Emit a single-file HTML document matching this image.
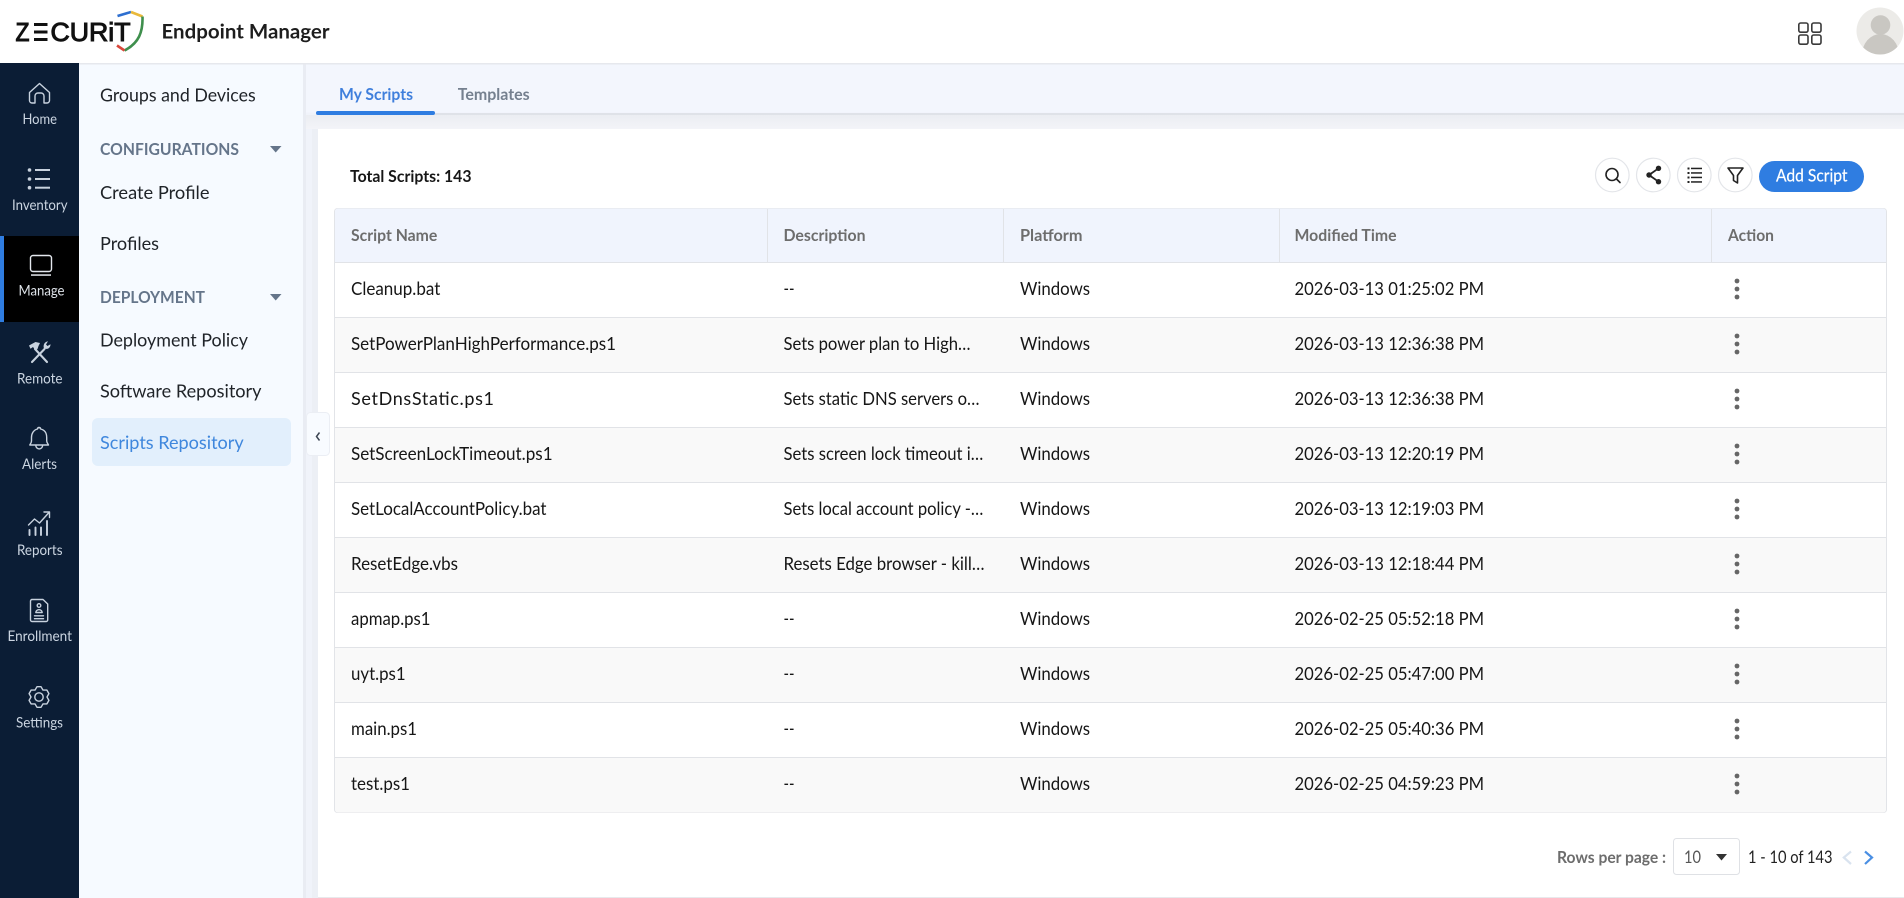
<!DOCTYPE html>
<html lang="en">
<head>
<meta charset="utf-8">
<title>Endpoint Manager - Scripts Repository</title>
<style>
html,body{margin:0;padding:0;width:1904px;height:898px;overflow:hidden;background:#fff}
svg{display:block}
text{font-family:"Lato","Carlito","Liberation Sans",sans-serif;white-space:pre}
.n{font-size:18px;fill:#1f2328}
.h{font-size:16px;font-weight:700;fill:#65758a}
.s{font-size:14.5px;fill:#cbd5e1}
.th{font-size:16px;font-weight:700;fill:#6d6d6d}
.td{font-size:18px;fill:#161616}
.ic{fill:none;stroke:#c8d2de;stroke-width:1.4;stroke-linecap:round;stroke-linejoin:round}
.tb{fill:none;stroke:#222;stroke-width:1.6;stroke-linecap:round;stroke-linejoin:round}
</style>
</head>
<body>
<svg width="1904" height="898" viewBox="0 0 1904 898" xmlns="http://www.w3.org/2000/svg">
<defs>
<clipPath id="av"><circle cx="1880" cy="31" r="23.5"/></clipPath>
<linearGradient id="sh" x1="0" y1="0" x2="0" y2="1"><stop offset="0" stop-color="#ebedf2"/><stop offset="1" stop-color="#f3f4f8"/></linearGradient>
</defs>

<!-- page backgrounds -->
<rect width="1904" height="898" fill="#f0f3fa"/>
<rect x="0" y="0" width="1904" height="63" fill="#fff"/>
<rect x="0" y="63" width="1904" height="1.5" fill="#e6e8ed"/>

<!-- logo -->
<text x="15.5" y="41" font-size="26" textLength="14" lengthAdjust="spacingAndGlyphs" stroke="#111" stroke-width="1" style="font-family:'Liberation Sans',sans-serif" fill="#111">Z</text>
<rect x="34" y="23" width="13.5" height="3" fill="#111"/><rect x="34" y="30.5" width="13.5" height="3" fill="#111"/><rect x="34" y="38" width="13.5" height="3" fill="#111"/>
<text x="50.5" y="41" font-size="26" textLength="80" lengthAdjust="spacingAndGlyphs" stroke="#111" stroke-width="1" style="font-family:'Liberation Sans',sans-serif" fill="#111">CURiT</text>
<path d="M117.5 16 L131 12" fill="none" stroke="#2e6fd0" stroke-width="2.6"/>
<path d="M131 12 L142.5 16.5" fill="none" stroke="#e9b93a" stroke-width="2.6"/>
<path d="M142.5 16.5 C143 32 139 43 124.5 50.5" fill="none" stroke="#3f8f4d" stroke-width="2.6"/>
<path d="M117 45.5 L124.5 50.5" fill="none" stroke="#d9483b" stroke-width="2.6"/>

<text x="161.5" y="38.5" font-size="20.5" font-weight="700" textLength="168" lengthAdjust="spacingAndGlyphs" fill="#1d1d1d">Endpoint Manager</text>

<!-- header right -->
<g fill="none" stroke="#3a3a3a" stroke-width="1.6">
<rect x="1798.8" y="23" width="9.2" height="9.2" rx="1.8"/><rect x="1811.8" y="23" width="9.2" height="9.2" rx="1.8"/>
<rect x="1798.8" y="35" width="9.2" height="9.2" rx="1.8"/><rect x="1811.8" y="35" width="9.2" height="9.2" rx="1.8"/>
</g>
<circle cx="1880" cy="31" r="23.5" fill="#ecebe8"/>
<g clip-path="url(#av)" fill="#c9c7c2"><circle cx="1880.5" cy="25" r="9.8"/><ellipse cx="1880.5" cy="55" rx="18.5" ry="21"/></g>

<!-- sidebar -->
<rect x="0" y="63" width="79" height="835" fill="#0b1d35"/>
<rect x="0" y="236" width="79" height="86" fill="#000"/>
<rect x="0" y="236" width="4" height="86" fill="#2f7de1"/>

<path class="ic" d="M29.5 92.5 L39.5 83.5 L49.5 92.5 V100.5 a2.5 2.5 0 0 1-2.5 2.5 H44 V96 a3 3 0 0 0-3-3 H38 a3 3 0 0 0-3 3 V103 H32 a2.5 2.5 0 0 1-2.5-2.5 Z"/>
<text class="s" x="22.5" y="124" textLength="34.5" lengthAdjust="spacingAndGlyphs">Home</text>

<g fill="#c8d2de"><circle cx="29.5" cy="170" r="1.8"/><circle cx="29.5" cy="179" r="1.8"/><circle cx="29.5" cy="187.7" r="1.8"/>
<rect x="35" y="169" width="15" height="2"/><rect x="35" y="178" width="15" height="2"/><rect x="35" y="186.7" width="15" height="2"/></g>
<text class="s" x="12" y="210" textLength="55.5" lengthAdjust="spacingAndGlyphs">Inventory</text>

<rect x="30.5" y="255.5" width="21" height="16" rx="2.5" fill="none" stroke="#e4e8ee" stroke-width="1.4"/>
<rect x="31" y="274.3" width="20" height="1.5" fill="#e4e8ee"/>
<text class="s" x="18.5" y="295.7" textLength="46" lengthAdjust="spacingAndGlyphs" style="fill:#dfe4ea">Manage</text>

<g fill="none" stroke="#c8d2de" stroke-linecap="round">
<path d="M47 362 L35 349" stroke-width="2.1"/>
<path d="M32 362 L44.5 349" stroke-width="2.1"/>
</g>
<path d="M29 345.5 L35.5 342 L40 343 L38.5 346 L37.5 349 L35.5 350.5 L33 347 L30.5 348.8 Z" fill="#c8d2de"/>
<path d="M44 348.5 C42.8 345 44.5 342 48 341.3 L46 344.5 L47.5 346 L50.5 344.2 C50.5 347.8 47.8 349.8 44 348.5 Z" fill="#c8d2de"/>
<text class="s" x="17" y="383.3" textLength="45.5" lengthAdjust="spacingAndGlyphs">Remote</text>

<path class="ic" d="M39 427.5 a1.6 1.6 0 0 1 1.6 1.5 C45 430 46.7 433.5 46.7 437.5 V441 C46.7 443 48.5 444.5 48.5 445 H29.8 C29.8 444.5 31.5 443 31.5 441 V437.5 C31.5 433.5 33.5 430 37.5 429 A1.6 1.6 0 0 1 39 427.5 Z M35.8 445.5 a3.4 3.4 0 0 0 6.8 0"/>
<text class="s" x="22" y="469" textLength="35" lengthAdjust="spacingAndGlyphs">Alerts</text>

<path class="ic" d="M28.5 525 L34.5 519 L39.5 523 L49 512.5 M44 512 H49.5 V517.5"/>
<path d="M29.5 530 V535 M35.5 527.5 V535 M41 527.5 V535 M47 521 V535" fill="none" stroke="#c8d2de" stroke-width="1.9" stroke-linecap="round"/>
<text class="s" x="17" y="555" textLength="45.5" lengthAdjust="spacingAndGlyphs">Reports</text>

<path class="ic" d="M32 599.5 H43 L47.7 604 V620 a1.5 1.5 0 0 1-1.5 1.5 H32 a1.5 1.5 0 0 1-1.5-1.5 V601 a1.5 1.5 0 0 1 1.5-1.5 Z" stroke-width="1.1"/>
<circle cx="39" cy="605.5" r="1.8" class="ic" stroke-width="1"/>
<path d="M35.8 612.5 a3.2 2.8 0 0 1 6.4 0 Z M34.5 615.8 H43.5 M34.5 618.7 H43.5" class="ic" stroke-width="1"/>
<text class="s" x="7.5" y="641" textLength="64.5" lengthAdjust="spacingAndGlyphs">Enrollment</text>

<path class="ic" d="M41 686.7 L43 690.1 L46.9 690.1 L48.9 693.6 L47 697 L48.9 700.4 L46.9 703.9 L43 703.9 L41 707.3 L37 707.3 L35 703.9 L31.1 703.9 L29.1 700.4 L31 697 L29.1 693.6 L31.1 690.1 L35 690.1 L37 686.7Z"/>
<circle class="ic" cx="39" cy="697" r="4.2"/>
<text class="s" x="16" y="727.5" textLength="47" lengthAdjust="spacingAndGlyphs">Settings</text>

<!-- sub navigation -->
<rect x="79" y="64.5" width="224" height="833.5" fill="#f6faff"/>
<rect x="303" y="64.5" width="3" height="833.5" fill="#e9ecf3"/>
<text class="n" x="100" y="101.7" textLength="155.7" lengthAdjust="spacingAndGlyphs">Groups and Devices</text>
<text class="h" x="100" y="155" textLength="139" lengthAdjust="spacingAndGlyphs">CONFIGURATIONS</text>
<path d="M270 146 H281.5 L275.7 152.5 Z" fill="#65758a"/>
<text class="n" x="100" y="199" textLength="109.5" lengthAdjust="spacingAndGlyphs">Create Profile</text>
<text class="n" x="100" y="250" textLength="59" lengthAdjust="spacingAndGlyphs">Profiles</text>
<text class="h" x="100" y="303" textLength="105" lengthAdjust="spacingAndGlyphs">DEPLOYMENT</text>
<path d="M270 294 H281.5 L275.7 300.5 Z" fill="#65758a"/>
<text class="n" x="100" y="346.7" textLength="148" lengthAdjust="spacingAndGlyphs">Deployment Policy</text>
<text class="n" x="100" y="397.7" textLength="161.5" lengthAdjust="spacingAndGlyphs">Software Repository</text>
<rect x="92" y="418" width="199" height="48" rx="6" fill="#e2effc"/>
<text class="n" x="100" y="449" textLength="143.7" lengthAdjust="spacingAndGlyphs" style="fill:#3f87dd">Scripts Repository</text>

<!-- tabs -->
<rect x="306" y="64.5" width="1598" height="48" fill="#f3f6fd"/>
<rect x="316" y="113" width="1588" height="2" fill="#dfe2e8"/>
<rect x="306" y="115" width="1598" height="14" fill="url(#sh)"/>
<rect x="316" y="111" width="119" height="4" rx="2" fill="#2f7de1"/>
<text x="339" y="100" font-size="16.5" font-weight="700" textLength="74" lengthAdjust="spacingAndGlyphs" fill="#3f7fdc">My Scripts</text>
<text x="457.7" y="100" font-size="16.5" font-weight="700" textLength="72" lengthAdjust="spacingAndGlyphs" fill="#75808f">Templates</text>

<!-- card -->
<rect x="312" y="129" width="6" height="769" fill="#eceff5"/>
<rect x="318" y="129" width="1586" height="768" fill="#fff"/>
<rect x="318" y="897" width="1586" height="1" fill="#e8e9ec"/>

<!-- collapse handle -->
<rect x="306.5" y="412.5" width="23" height="43" rx="4" fill="#f8fbff" stroke="#ebeef4" stroke-width="1"/>
<path d="M319.5 432.5 L316.5 436.5 L319.5 440.5" fill="none" stroke="#3d4654" stroke-width="1.5"/>

<text x="350" y="182" font-size="16.5" font-weight="700" textLength="121.5" lengthAdjust="spacingAndGlyphs" fill="#161616">Total Scripts: 143</text>

<!-- toolbar -->
<g fill="#fff" stroke="#e3e5e9" stroke-width="1.2">
<circle cx="1612.3" cy="175" r="16.8"/><circle cx="1653.3" cy="175" r="16.8"/><circle cx="1694.3" cy="175" r="16.8"/><circle cx="1735.3" cy="175" r="16.8"/>
</g>
<circle class="tb" cx="1612" cy="174.5" r="6"/><path class="tb" d="M1616.5 179 L1620 182.5"/>
<g fill="#222"><circle cx="1658.5" cy="168.3" r="2.7"/><circle cx="1649" cy="175" r="2.7"/><circle cx="1658.5" cy="181.7" r="2.7"/></g>
<path d="M1658.5 168.3 L1649 175 L1658.5 181.7" fill="none" stroke="#222" stroke-width="1.8"/>
<g fill="#222"><rect x="1687.5" y="167.5" width="2" height="2"/><rect x="1687.5" y="172" width="2" height="2"/><rect x="1687.5" y="176.5" width="2" height="2"/><rect x="1687.5" y="181" width="2" height="2"/>
<rect x="1691" y="167.7" width="11" height="1.5"/><rect x="1691" y="172.2" width="11" height="1.5"/><rect x="1691" y="176.7" width="11" height="1.5"/><rect x="1691" y="181.2" width="11" height="1.5"/></g>
<path class="tb" d="M1728 168 H1743 L1737.5 175.5 V183 L1733.5 180.5 V175.5 Z" stroke-width="1.5"/>
<rect x="1759" y="161" width="105" height="31" rx="15.5" fill="#2f7de1"/>
<text x="1776" y="181.5" font-size="17" font-weight="400" textLength="71.5" lengthAdjust="spacingAndGlyphs" fill="#fff" stroke="#fff" stroke-width="0.2">Add Script</text>

<!-- table -->
<rect x="334.5" y="208.5" width="1552" height="604" rx="3" fill="#fff" stroke="#e2e4e8"/>
<path d="M335 262 V211.5 a3 3 0 0 1 3-3 H1883 a3 3 0 0 1 3 3 V262 Z" fill="#f0f4fd"/>
<g fill="#f9f9f9">
<rect x="335" y="318" width="1551" height="54.5"/>
<rect x="335" y="428" width="1551" height="54.5"/>
<rect x="335" y="538" width="1551" height="54.5"/>
<rect x="335" y="648" width="1551" height="54.5"/>
<path d="M335 758 H1886 V809.5 a3 3 0 0 1-3 3 H338 a3 3 0 0 1-3-3 Z"/>
</g>
<g fill="#e1e3e7">
<rect x="335" y="262" width="1551" height="1"/><rect x="335" y="317" width="1551" height="1"/><rect x="335" y="372" width="1551" height="1"/><rect x="335" y="427" width="1551" height="1"/><rect x="335" y="482" width="1551" height="1"/><rect x="335" y="537" width="1551" height="1"/><rect x="335" y="592" width="1551" height="1"/><rect x="335" y="647" width="1551" height="1"/><rect x="335" y="702" width="1551" height="1"/><rect x="335" y="757" width="1551" height="1"/>
<rect x="767" y="209" width="1" height="53"/><rect x="1003" y="209" width="1" height="53"/><rect x="1279" y="209" width="1" height="53"/><rect x="1711" y="209" width="1" height="53"/>
</g>
<text class="th" x="351" y="241" textLength="86.3" lengthAdjust="spacingAndGlyphs">Script Name</text>
<text class="th" x="783.5" y="241" textLength="82" lengthAdjust="spacingAndGlyphs">Description</text>
<text class="th" x="1020" y="241" textLength="62.5" lengthAdjust="spacingAndGlyphs">Platform</text>
<text class="th" x="1294.5" y="241" textLength="102" lengthAdjust="spacingAndGlyphs">Modified Time</text>
<text class="th" x="1728" y="241" textLength="46" lengthAdjust="spacingAndGlyphs">Action</text>

<text class="td" x="351" y="295" textLength="89.3" lengthAdjust="spacingAndGlyphs">Cleanup.bat</text>
<text class="td" x="783.5" y="295" textLength="11" lengthAdjust="spacingAndGlyphs">--</text>
<text class="td" x="1020" y="295" textLength="70" lengthAdjust="spacingAndGlyphs">Windows</text>
<text class="td" x="1294.5" y="295" textLength="189.5" lengthAdjust="spacingAndGlyphs">2026-03-13 01:25:02 PM</text>

<text class="td" x="351" y="350" textLength="265" lengthAdjust="spacingAndGlyphs">SetPowerPlanHighPerformance.ps1</text>
<text class="td" x="783.5" y="350" textLength="187" lengthAdjust="spacingAndGlyphs">Sets power plan to High…</text>
<text class="td" x="1020" y="350" textLength="70" lengthAdjust="spacingAndGlyphs">Windows</text>
<text class="td" x="1294.5" y="350" textLength="189.5" lengthAdjust="spacingAndGlyphs">2026-03-13 12:36:38 PM</text>

<text class="td" x="351" y="405" textLength="143" lengthAdjust="spacing">SetDnsStatic.ps1</text>
<text class="td" x="783.5" y="405" textLength="196" lengthAdjust="spacingAndGlyphs">Sets static DNS servers o…</text>
<text class="td" x="1020" y="405" textLength="70" lengthAdjust="spacingAndGlyphs">Windows</text>
<text class="td" x="1294.5" y="405" textLength="189.5" lengthAdjust="spacingAndGlyphs">2026-03-13 12:36:38 PM</text>

<text class="td" x="351" y="460" textLength="201.6" lengthAdjust="spacingAndGlyphs">SetScreenLockTimeout.ps1</text>
<text class="td" x="783.5" y="460" textLength="199.8" lengthAdjust="spacingAndGlyphs">Sets screen lock timeout i…</text>
<text class="td" x="1020" y="460" textLength="70" lengthAdjust="spacingAndGlyphs">Windows</text>
<text class="td" x="1294.5" y="460" textLength="189.5" lengthAdjust="spacingAndGlyphs">2026-03-13 12:20:19 PM</text>

<text class="td" x="351" y="515" textLength="195.5" lengthAdjust="spacingAndGlyphs">SetLocalAccountPolicy.bat</text>
<text class="td" x="783.5" y="515" textLength="199.8" lengthAdjust="spacingAndGlyphs">Sets local account policy -…</text>
<text class="td" x="1020" y="515" textLength="70" lengthAdjust="spacingAndGlyphs">Windows</text>
<text class="td" x="1294.5" y="515" textLength="189.5" lengthAdjust="spacingAndGlyphs">2026-03-13 12:19:03 PM</text>

<text class="td" x="351" y="570" textLength="107" lengthAdjust="spacingAndGlyphs">ResetEdge.vbs</text>
<text class="td" x="783.5" y="570" textLength="201" lengthAdjust="spacingAndGlyphs">Resets Edge browser - kill…</text>
<text class="td" x="1020" y="570" textLength="70" lengthAdjust="spacingAndGlyphs">Windows</text>
<text class="td" x="1294.5" y="570" textLength="189.5" lengthAdjust="spacingAndGlyphs">2026-03-13 12:18:44 PM</text>

<text class="td" x="351" y="625" textLength="79.5" lengthAdjust="spacingAndGlyphs">apmap.ps1</text>
<text class="td" x="783.5" y="625" textLength="11" lengthAdjust="spacingAndGlyphs">--</text>
<text class="td" x="1020" y="625" textLength="70" lengthAdjust="spacingAndGlyphs">Windows</text>
<text class="td" x="1294.5" y="625" textLength="189.5" lengthAdjust="spacingAndGlyphs">2026-02-25 05:52:18 PM</text>

<text class="td" x="351" y="680" textLength="54.6" lengthAdjust="spacingAndGlyphs">uyt.ps1</text>
<text class="td" x="783.5" y="680" textLength="11" lengthAdjust="spacingAndGlyphs">--</text>
<text class="td" x="1020" y="680" textLength="70" lengthAdjust="spacingAndGlyphs">Windows</text>
<text class="td" x="1294.5" y="680" textLength="189.5" lengthAdjust="spacingAndGlyphs">2026-02-25 05:47:00 PM</text>

<text class="td" x="351" y="735" textLength="66" lengthAdjust="spacingAndGlyphs">main.ps1</text>
<text class="td" x="783.5" y="735" textLength="11" lengthAdjust="spacingAndGlyphs">--</text>
<text class="td" x="1020" y="735" textLength="70" lengthAdjust="spacingAndGlyphs">Windows</text>
<text class="td" x="1294.5" y="735" textLength="189.5" lengthAdjust="spacingAndGlyphs">2026-02-25 05:40:36 PM</text>

<text class="td" x="351" y="790" textLength="59" lengthAdjust="spacingAndGlyphs">test.ps1</text>
<text class="td" x="783.5" y="790" textLength="11" lengthAdjust="spacingAndGlyphs">--</text>
<text class="td" x="1020" y="790" textLength="70" lengthAdjust="spacingAndGlyphs">Windows</text>
<text class="td" x="1294.5" y="790" textLength="189.5" lengthAdjust="spacingAndGlyphs">2026-02-25 04:59:23 PM</text>

<!-- action dots -->
<g fill="#666">
<circle cx="1737" cy="281" r="2.4"/><circle cx="1737" cy="289" r="2.4"/><circle cx="1737" cy="297" r="2.4"/>
<circle cx="1737" cy="336" r="2.4"/><circle cx="1737" cy="344" r="2.4"/><circle cx="1737" cy="352" r="2.4"/>
<circle cx="1737" cy="391" r="2.4"/><circle cx="1737" cy="399" r="2.4"/><circle cx="1737" cy="407" r="2.4"/>
<circle cx="1737" cy="446" r="2.4"/><circle cx="1737" cy="454" r="2.4"/><circle cx="1737" cy="462" r="2.4"/>
<circle cx="1737" cy="501" r="2.4"/><circle cx="1737" cy="509" r="2.4"/><circle cx="1737" cy="517" r="2.4"/>
<circle cx="1737" cy="556" r="2.4"/><circle cx="1737" cy="564" r="2.4"/><circle cx="1737" cy="572" r="2.4"/>
<circle cx="1737" cy="611" r="2.4"/><circle cx="1737" cy="619" r="2.4"/><circle cx="1737" cy="627" r="2.4"/>
<circle cx="1737" cy="666" r="2.4"/><circle cx="1737" cy="674" r="2.4"/><circle cx="1737" cy="682" r="2.4"/>
<circle cx="1737" cy="721" r="2.4"/><circle cx="1737" cy="729" r="2.4"/><circle cx="1737" cy="737" r="2.4"/>
<circle cx="1737" cy="776" r="2.4"/><circle cx="1737" cy="784" r="2.4"/><circle cx="1737" cy="792" r="2.4"/>
</g>

<!-- pagination -->
<text x="1557" y="863" font-size="16" font-weight="700" textLength="109" lengthAdjust="spacingAndGlyphs" fill="#6d6d6d">Rows per page :</text>
<rect x="1673.5" y="838.5" width="66" height="36" rx="3" fill="#fff" stroke="#dfe1e5"/>
<text x="1684" y="863" font-size="17" textLength="17" lengthAdjust="spacingAndGlyphs" fill="#555">10</text>
<path d="M1716 854 H1727 L1721.5 860.5 Z" fill="#333"/>
<text x="1748" y="863" font-size="17" textLength="84.5" lengthAdjust="spacingAndGlyphs" fill="#222">1 - 10 of 143</text>
<path d="M1851 851.5 L1843.8 857.5 L1851 864" fill="none" stroke="#d9e3ef" stroke-width="2.2"/>
<path d="M1865 851.5 L1872 857.5 L1865 864" fill="none" stroke="#4a8fe3" stroke-width="2.2"/>
</svg>
</body>
</html>
